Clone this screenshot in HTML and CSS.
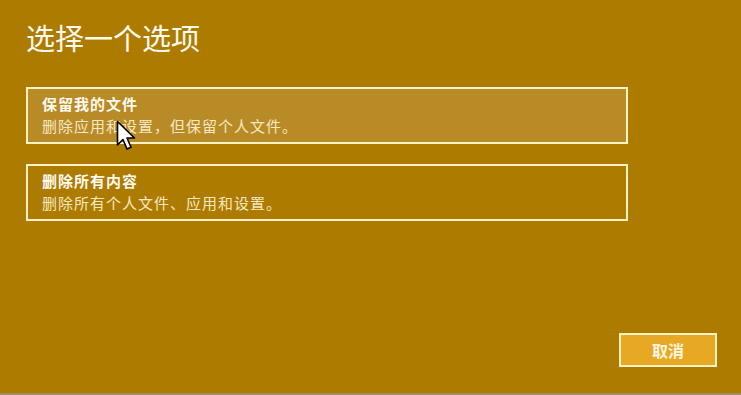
FILE: index.html
```html
<!DOCTYPE html>
<html lang="zh-CN">
<head>
<meta charset="utf-8">
<link rel="stylesheet" href="styles.css">
</head>
<body>
<div class="page">
  <h1 class="title">选择一个选项</h1>
  <div class="options">
    <div class="option hover">
      <div class="opt-title">保留我的文件</div>
      <div class="opt-desc">删除应用和设置，但保留个人文件。</div>
      <svg class="cursor" width="22" height="32" viewBox="0 0 22 32"><path d="M1.5 1.5 L1.5 25 L7 19.5 L11 29 L15 27.3 L11 18 L18.5 18 Z" fill="#fff" stroke="#000" stroke-width="1.6" stroke-linejoin="round"/></svg>
    </div>
    <div class="option">
      <div class="opt-title">删除所有内容</div>
      <div class="opt-desc">删除所有个人文件、应用和设置。</div>
    </div>
  </div>
  <div class="actions">
    <button class="btn">取消</button>
  </div>
</div>
<div class="bottom-strip"></div>
</body>
</html>
```
FILE: styles.css
```css
html, body {
  margin: 0;
  padding: 0;
}
body {
  background: #ad7b00;
  font-family: "Noto Sans CJK SC", "Noto Sans", sans-serif;
  color: #fff8e6;
  width: 741px;
  height: 395px;
  overflow: hidden;
  display: flex;
  flex-direction: column;
}
.page {
  flex: 1;
  display: flex;
  flex-direction: column;
  padding: 18px 24px 26px 26px;
}
.title {
  margin: 0;
  font-size: 29px;
  font-weight: 400;
  line-height: 38px;
  color: #fffaf0;
}
.options {
  margin-top: 31px;
  display: flex;
  flex-direction: column;
  gap: 20px;
}
.option {
  position: relative;
  width: 570px;
  border: 2px solid #fff3c4;
  padding: 4px 14px 5px;
}
.option.hover {
  background: #b98b26;
}
.opt-title {
  font-size: 15px;
  letter-spacing: 1px;
  font-weight: 700;
  line-height: 22px;
  color: #fffaf0;
}
.opt-desc {
  font-size: 15px;
  letter-spacing: 1px;
  line-height: 22px;
  color: #f6e8c2;
}
.cursor {
  position: absolute;
  left: 88px;
  top: 31px;
}
.actions {
  margin-top: auto;
  display: flex;
  justify-content: flex-end;
}
.btn {
  width: 98px;
  height: 34px;
  background: #e7a823;
  border: 2px solid #fff3c4;
  color: #fff6e0;
  font-family: "Noto Sans CJK SC", sans-serif;
  font-size: 16px;
  font-weight: 700;
  padding: 0;
}
.bottom-strip {
  height: 2px;
  background: #a18b62;
}
```
